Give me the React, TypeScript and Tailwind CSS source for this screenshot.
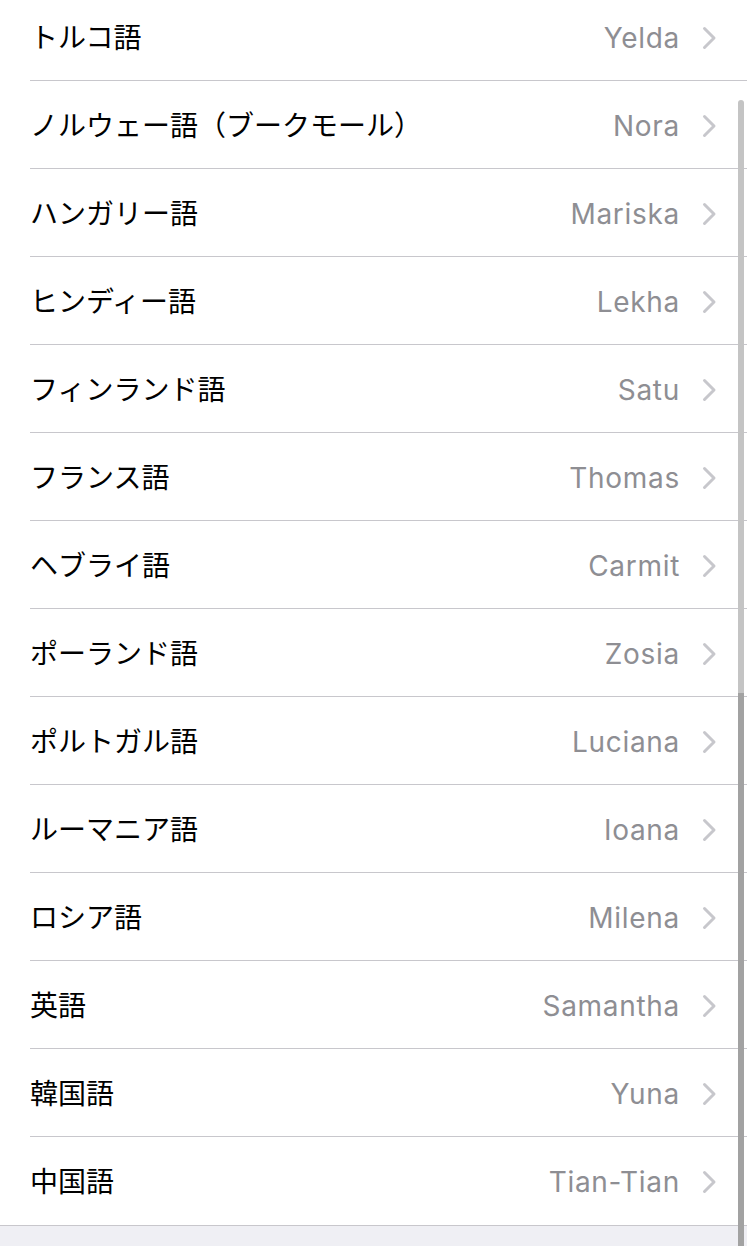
import React from "react";

const rows: [string, string][] = [
  ["トルコ語", "Yelda"],
  ["ノルウェー語（ブークモール）", "Nora"],
  ["ハンガリー語", "Mariska"],
  ["ヒンディー語", "Lekha"],
  ["フィンランド語", "Satu"],
  ["フランス語", "Thomas"],
  ["ヘブライ語", "Carmit"],
  ["ポーランド語", "Zosia"],
  ["ポルトガル語", "Luciana"],
  ["ルーマニア語", "Ioana"],
  ["ロシア語", "Milena"],
  ["英語", "Samantha"],
  ["韓国語", "Yuna"],
  ["中国語", "Tian-Tian"],
];

function Chevron() {
  return (
    <svg width="15" height="24" viewBox="0 0 15 24" fill="none">
      <path d="M2.5 2.5 L12 12 L2.5 21.5" stroke="#c7c7cc" strokeWidth="3" strokeLinecap="round" strokeLinejoin="round" />
    </svg>
  );
}

export default function App() {
  return (
    <div
      className="relative w-[747px] h-[1246px] overflow-hidden bg-white"
      style={{ fontFamily: "Inter, 'Noto Sans CJK JP', sans-serif" }}
    >
      <div className="-mt-[7px]">
        {rows.map(([label, value], i) => {
          const last = i === rows.length - 1;
          return (
            <div key={label} className="pl-[30px]">
              <div
                className={`flex h-[88px] items-center pt-[2px] pr-[30px] ${last ? "" : "border-b border-[#c8c7cc]"}`}
              >
                <span
                  className="flex-1 pb-[4px] text-[28px] text-black"
                  style={{ fontFamily: "'Noto Sans CJK JP', sans-serif" }}
                >
                  {label}
                </span>
                <span className="text-[28px] tracking-[0.7px] text-[#8e8e93]">{value}</span>
                <span className="ml-[22px] flex items-center">
                  <Chevron />
                </span>
              </div>
            </div>
          );
        })}
        <div className="h-[40px] border-t border-[#c8c7cc] bg-[#efeff4]" />
      </div>
      <div className="absolute left-[738px] top-[100px] h-[594px] w-[6px] rounded-t-full bg-[#c4c4c4]" />
      <div className="absolute left-[738px] top-[693px] h-[560px] w-[6px] bg-[#a2a2a2]" />
    </div>
  );
}
